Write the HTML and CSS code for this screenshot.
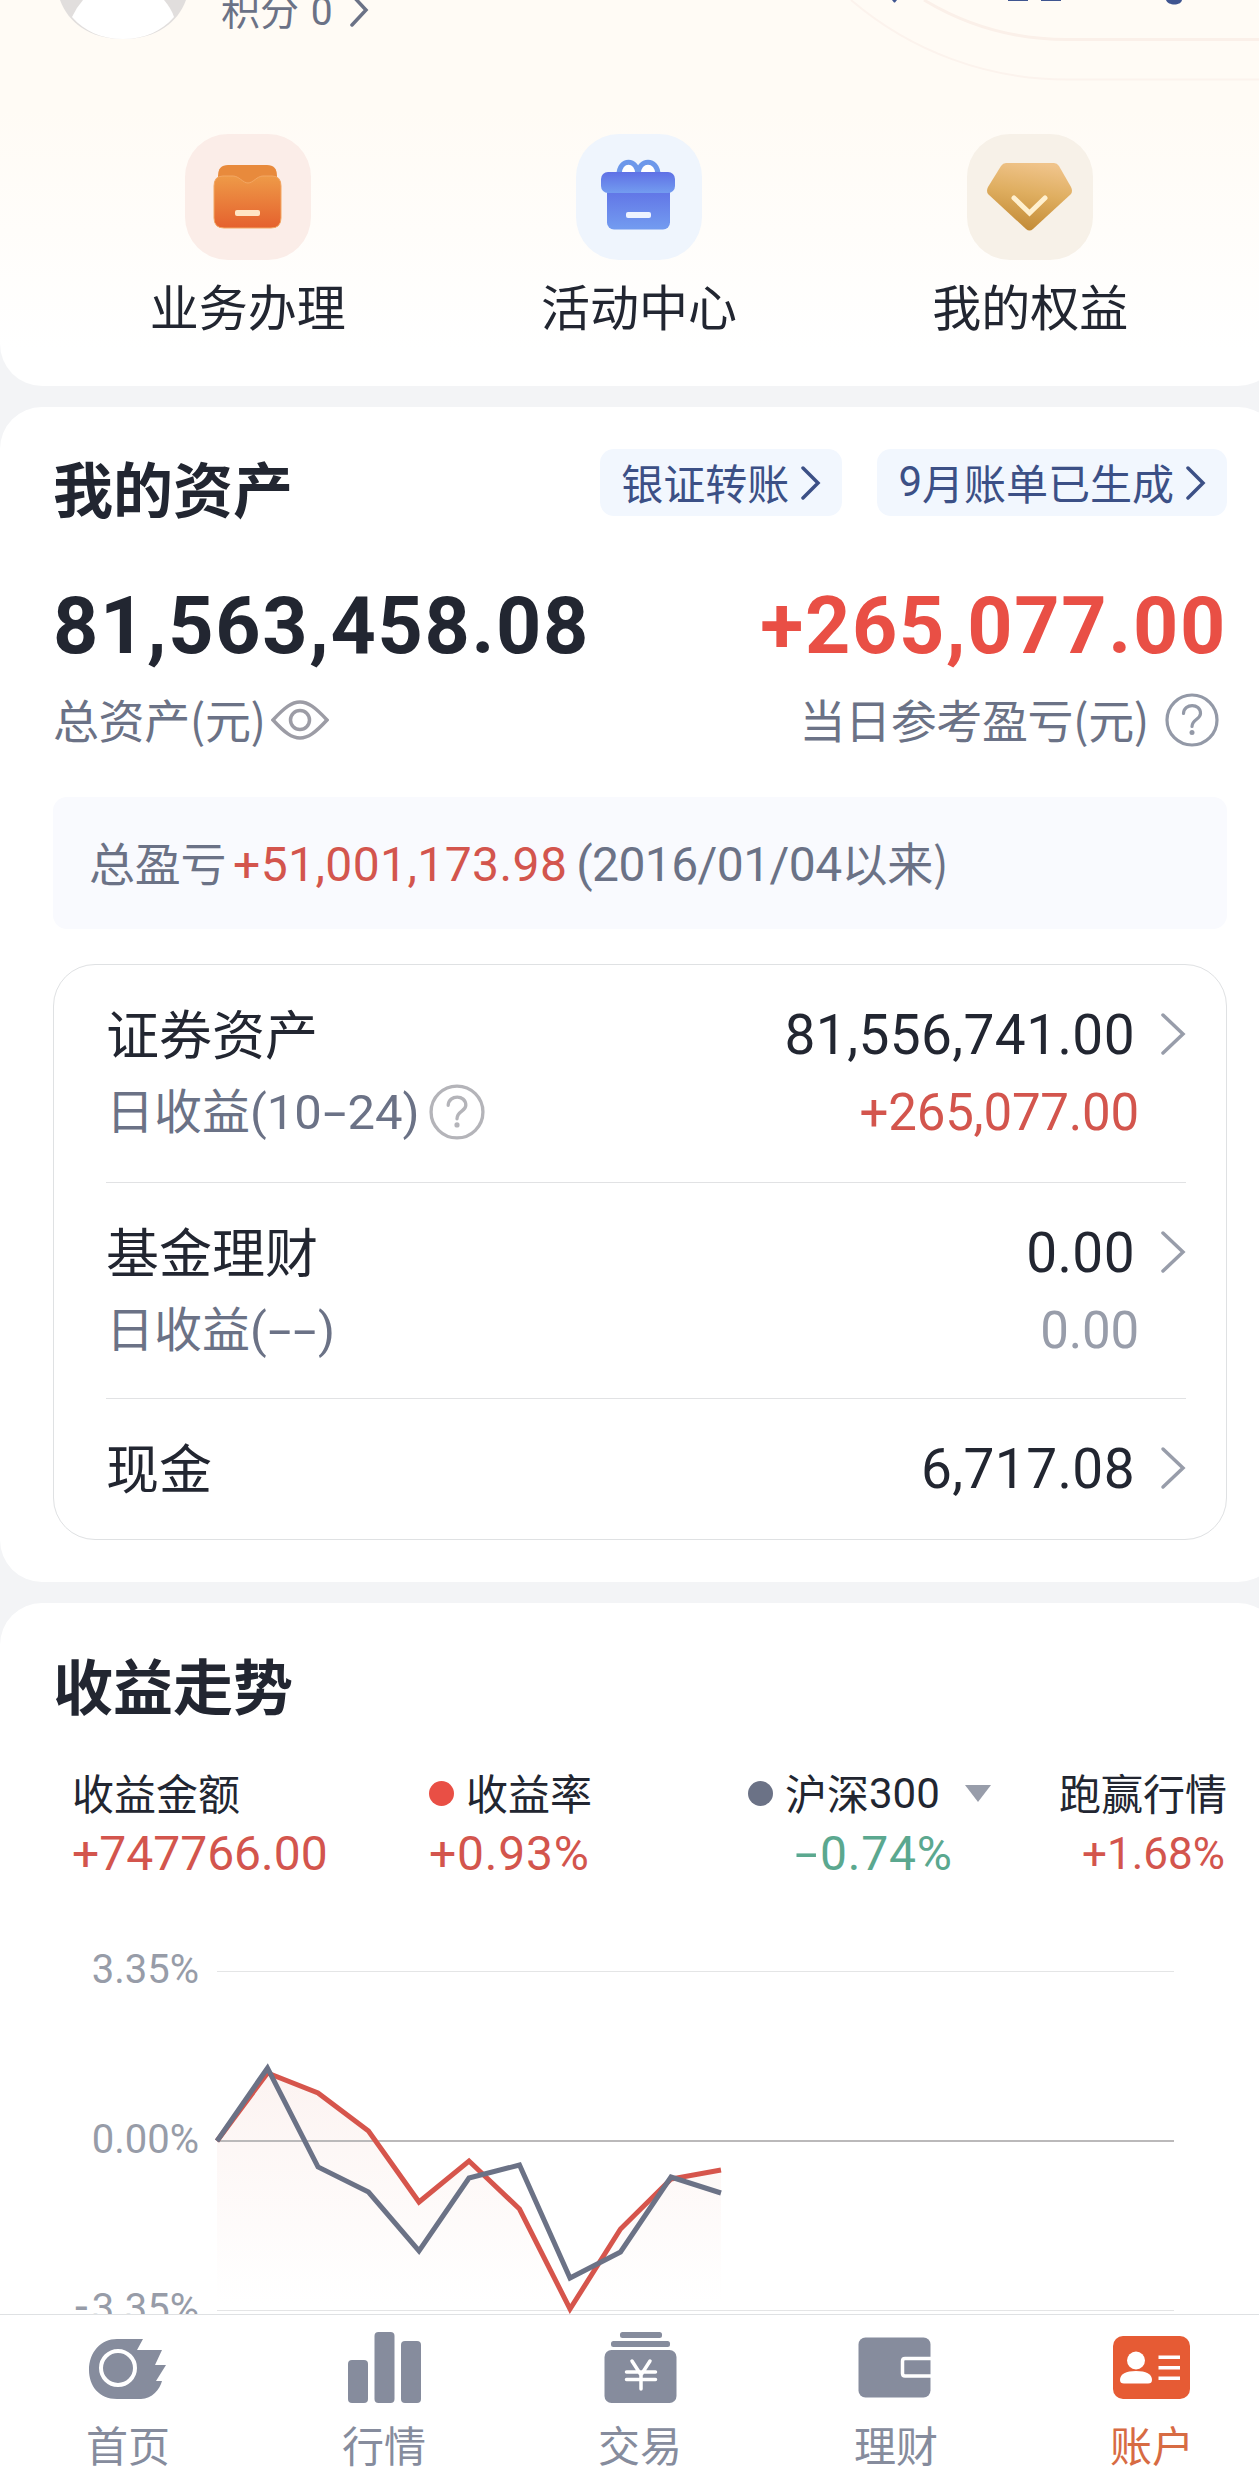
FILE: index.html
```
<!DOCTYPE html>
<html lang="zh-CN">

<head>
    <title>账户</title>
    <meta charset="UTF-8">
    <link rel="stylesheet" href="styles.css">
</head>

<body>
    <div class="page">
        <main class="content">

            <section class="card profile-card">
                <svg class="rings" width="440" height="84" viewBox="0 0 440 84" fill="none">
                    <path d="M32 0A331 331 0 0 0 248 79.500H440" stroke="#fcf3ed" stroke-width="2" />
                    <path d="M105 0A276 276 0 0 0 248 39.500H440" stroke="#fbf0e9" stroke-width="3" />
                    <path d="M73 0h5l-2 2.500h-1zM189 0h20v1h-20zM222 0h20v1h-20zM347 0h16c-1 6-14 6-16 0z" fill="#3f5590" />
                </svg>
                <div class="profile">
                    <svg class="avatar" width="128" height="40" viewBox="0 0 128 40">
                        <path d="M1 0h126C119 22 98 39 64 39S9 22 1 0z" fill="#e1dedd" />
                        <path d="M24 0h81q7 8 10 17C103 31 86 39 64 39S25 31 13 17Q17 8 24 0z" fill="#fff" />
                    </svg>
                    <div class="points">积分 <span class="num">0</span></div>
                    <svg class="points-arrow" width="20" height="36" viewBox="0 0 20 36"><path d="M2 3l14 15L2 33" /></svg>
                </div>
                <div class="shortcuts">
                    <div class="shortcut">
                        <svg width="126" height="126" viewBox="0 0 126 126">
                            <defs>
                                <linearGradient id="orange" x1="0" y1="0" x2="0" y2="1">
                                    <stop offset="0" stop-color="#ee9a48" />
                                    <stop offset="1" stop-color="#e5612e" />
                                </linearGradient>
                            </defs>
                            <rect width="126" height="126" rx="43" fill="#fbede8" />
                            <path d="M43 31H82Q92 31 92 42V56H33V42Q33 31 43 31z" fill="#e88a3c" />
                            <path d="M38 42H48C54 42 58 49 63 49S72 42 78 42H87Q96 42 96 52V84Q96 94 86 94H39Q29 94 29 84V52Q29 42 38 42z" fill="url(#orange)" stroke="#f3a763" stroke-width="1" />
                            <rect x="50" y="76" width="25" height="6" rx="2" fill="#ffe5c4" />
                        </svg>
                        <span>业务办理</span>
                    </div>
                    <div class="shortcut">
                        <svg width="126" height="126" viewBox="0 0 126 126">
                            <defs>
                                <linearGradient id="blue" x1="0" y1="0" x2="0" y2="1">
                                    <stop offset="0" stop-color="#5f70e5" />
                                    <stop offset="1" stop-color="#739cf0" />
                                </linearGradient>
                            </defs>
                            <rect width="126" height="126" rx="43" fill="#eff5fd" />
                            <path d="M43 41C43 24 62 24 62 41C62 24 82 24 82 41" fill="#fff" stroke="#6d98ea" stroke-width="5" />
                            <rect x="31" y="52" width="63" height="43.500" rx="7" fill="url(#blue)" />
                            <rect x="25" y="38" width="74" height="21" rx="7" fill="url(#blue)" />
                            <rect x="50" y="78" width="25" height="6" rx="2" fill="#eef3ff" />
                        </svg>
                        <span>活动中心</span>
                    </div>
                    <div class="shortcut">
                        <svg width="126" height="126" viewBox="0 0 126 126">
                            <defs>
                                <linearGradient id="gold" x1="0.600" y1="0" x2="0.400" y2="1">
                                    <stop offset="0" stop-color="#f0c48b" />
                                    <stop offset="0.450" stop-color="#dfae60" />
                                    <stop offset="1" stop-color="#c28a35" />
                                </linearGradient>
                            </defs>
                            <rect width="126" height="126" rx="43" fill="#f7f1e8" />
                            <path d="M39 29H87Q90 29 92 32L104 53Q106 57 104 60L66 95Q62.500 98 59 95L21 60Q19 57 21 53L34 32Q36 29 39 29z" fill="url(#gold)" />
                            <path d="M47 64L62.500 79L78 64" fill="none" stroke="#fff0cf" stroke-width="5" stroke-linecap="round" />
                        </svg>
                        <span>我的权益</span>
                    </div>
                </div>
            </section>

            <section class="card assets-card">
                <div class="card-head">
                    <h2>我的资产</h2>
                    <div class="pills">
                        <a class="pill">银证转账<svg width="20" height="34" viewBox="0 0 20 34"><path d="M2 2l15 15L2 32" /></svg></a>
                        <a class="pill"><span class="num">9</span>月账单已生成<svg width="20" height="34" viewBox="0 0 20 34"><path d="M2 2l15 15L2 32" /></svg></a>
                    </div>
                </div>
                <div class="totals">
                    <span>81,563,458.08</span>
                    <span class="up">+265,077.00</span>
                </div>
                <div class="totals-labels">
                    <div class="total-label">总资产(元)
                        <svg class="eye" width="58" height="42" viewBox="0 0 58 42"><path d="M2 21C14 8 21 3 29 3S44 8 56 21C44 34 37 39 29 39S14 34 2 21z" /><circle cx="29" cy="21" r="9.500" /></svg>
                    </div>
                    <div class="total-label">当日参考盈亏(元)
                        <svg class="help help-dark" width="54" height="54" viewBox="0 0 54 54"><circle cx="27" cy="27" r="25" /><path d="M18.500 20.500C19 10 35.500 10 35.500 20.500C35.500 26.500 27 26 27 33.500" /><circle class="dot" cx="27" cy="39.500" r="2.500" /></svg>
                    </div>
                </div>
                <div class="summary">
                    总盈亏<span class="num summary-up">+51,001,173.98</span><span class="num summary-date">(2016/01/04</span>以来)
                </div>

                <div class="accounts">
                    <div class="account">
                        <div class="account-main">
                            <span>证券资产</span>
                            <span class="amount">81,556,741.00</span>
                            <svg width="26" height="44" viewBox="0 0 26 44"><path d="M3 3l20 19L3 41" /></svg>
                        </div>
                        <div class="account-sub">
                            <span>日收益<span class="num">(10<span class="dash">-</span>24)</span></span>
                            <svg class="help" width="56" height="56" viewBox="0 0 54 54"><circle cx="27" cy="27" r="25" /><path d="M18.500 20.500C19 10 35.500 10 35.500 20.500C35.500 26.500 27 26 27 33.500" /><circle class="dot" cx="27" cy="39.500" r="2.500" /></svg>
                            <span class="change up">+265,077.00</span>
                        </div>
                    </div>
                    <div class="account">
                        <div class="account-main">
                            <span>基金理财</span>
                            <span class="amount">0.00</span>
                            <svg width="26" height="44" viewBox="0 0 26 44"><path d="M3 3l20 19L3 41" /></svg>
                        </div>
                        <div class="account-sub">
                            <span>日收益<span class="num">(<span class="dash">-</span><span class="dash">-</span>)</span></span>
                            <span class="change">0.00</span>
                        </div>
                    </div>
                    <div class="account">
                        <div class="account-main">
                            <span>现金</span>
                            <span class="amount">6,717.08</span>
                            <svg width="26" height="44" viewBox="0 0 26 44"><path d="M3 3l20 19L3 41" /></svg>
                        </div>
                    </div>
                </div>
            </section>

            <section class="card trend-card">
                <h2>收益走势</h2>
                <div class="stats">
                    <div class="stat">
                        <div class="stat-name">收益金额</div>
                        <div class="stat-value up">+747766.00</div>
                    </div>
                    <div class="stat stat-rate">
                        <div class="stat-name"><i class="legend legend-red"></i>收益率</div>
                        <div class="stat-value up">+0.93%</div>
                    </div>
                    <div class="stat stat-index">
                        <div class="stat-name"><i class="legend legend-gray"></i>沪深<span class="num">300</span><i class="triangle"></i></div>
                        <div class="stat-value down"><span class="dash">-</span>0.74%</div>
                    </div>
                    <div class="stat stat-right">
                        <div class="stat-name">跑赢行情</div>
                        <div class="stat-value up small">+1.68%</div>
                    </div>
                </div>
                <svg class="chart" width="1174" height="440" viewBox="0 0 1174 440">
                    <defs>
                        <linearGradient id="area" gradientUnits="userSpaceOnUse" x1="0" y1="165" x2="0" y2="400">
                            <stop offset="0" stop-color="#fcf3f1" />
                            <stop offset="1" stop-color="#ffffff" />
                        </linearGradient>
                    </defs>
                    <path d="M164 238L214.500 170L265 190L315.500 228L366 299L416 258L466.500 306L517 406L567.500 326L618 276L668 267V407H164z" fill="url(#area)" />
                    <path d="M164 68.500H1121M164 407.500H1121" stroke="#e4e5e6" />
                    <path d="M164 238H1121" stroke="#bbb9ba" stroke-width="2" />
                    <polyline points="164,238 214.500,170 265,190 315.500,228 366,299 416,258 466.500,306 517,406 567.500,326 618,276 668,267" fill="none" stroke="#d6554c" stroke-width="5" />
                    <polyline points="164,238 214.500,165 265,264 315.500,289 366,348 416,275 466.500,262 517,375 567.500,349 618,274 668,290" fill="none" stroke="#6b7286" stroke-width="5" />
                    <text x="146" y="80">3.35%</text>
                    <text x="146" y="249.500">0.00%</text>
                    <text x="146" y="419"><tspan class="axis-minus">-</tspan>3.35%</text>
                </svg>
            </section>
        </main>

        <nav class="tabbar">
            <a class="tab">
                <svg width="80" height="80" viewBox="0 0 80 80">
                    <path d="M29 12H55L49 23H74L67 38H78L68 54H74C72 62 64 72 53 72H29C11 72 1 59 1 43C1 25 13 12 29 12z" />
                    <circle cx="30" cy="41" r="17" fill="none" stroke="#fff" stroke-width="4" />
                </svg>
                <span>首页</span>
            </a>
            <a class="tab">
                <svg width="80" height="80" viewBox="0 0 80 80">
                    <rect x="4" y="33" width="20" height="43" rx="4" />
                    <rect x="30.500" y="5" width="20" height="71" rx="4" />
                    <rect x="57" y="14" width="20" height="62" rx="4" />
                </svg>
                <span>行情</span>
            </a>
            <a class="tab">
                <svg width="80" height="80" viewBox="0 0 80 80">
                    <rect x="20" y="5" width="42" height="6" rx="2.500" />
                    <rect x="11" y="14" width="59" height="6" rx="2.500" />
                    <rect x="4.500" y="23" width="72" height="53" rx="7" />
                    <path d="M32 34l9 14l9-14M41 48v14M26.500 45h29M26.500 52.500h29" fill="none" stroke="#fff" stroke-width="3.500" stroke-linecap="round" />
                </svg>
                <span>交易</span>
            </a>
            <a class="tab">
                <svg width="80" height="80" viewBox="0 0 80 80">
                    <rect x="2.500" y="10.500" width="72" height="60" rx="7" />
                    <path d="M75 31.500H49Q46.500 31.500 46.500 34V46.500Q46.500 49 49 49H75" fill="none" stroke="#fff" stroke-width="3.500" />
                </svg>
                <span>理财</span>
            </a>
            <a class="tab active">
                <svg width="80" height="80" viewBox="0 0 80 80">
                    <rect x="1" y="9" width="77" height="63" rx="10" />
                    <g fill="#fff">
                        <circle cx="24" cy="33.500" r="9" />
                        <path d="M8 53C8 47 14 44 24 44S40 47 40 53Q40 56.500 36 56.500H12Q8 56.500 8 53z" />
                        <path d="M46.500 28.500H68V32H46.500zM46.500 39H68V42.500H46.500zM46.500 49.500H68V53H46.500z" />
                    </g>
                </svg>
                <span>账户</span>
            </a>
        </nav>
    </div>
</body>

</html>
```
FILE: styles.css
```
* {
    box-sizing: border-box;
}

body {
    margin: 0;
    overflow: hidden;
    background: #f3f4f6;
    color: #222631;
    font-family: "Noto Sans CJK SC", "Noto Sans", sans-serif;
}

.num,
.totals,
.amount,
.change,
.stat-value {
    font-family: Roboto, "Noto Sans CJK SC", sans-serif;
}

/* wide minus sign */
.dash {
    display: inline-block;
    margin: 0 6px;
    transform: scaleX(1.7);
}

h2 {
    margin: 0;
    font-size: 60px;
    line-height: 70px;
    font-weight: 700;
}

.page {
    display: flex;
    flex-direction: column;
    width: 1280px;
    height: 2489px;
}

.content {
    flex: 1;
    min-height: 0;
    overflow: hidden;
    display: flex;
    flex-direction: column;
    gap: 21px;
}

.card {
    flex: none;
    background: #fff;
    border-radius: 42px;
    padding: 0 53px;
}

/* profile and shortcuts */
.profile-card {
    position: relative;
    height: 386px;
    padding: 0 54px 0 52px;
    border-radius: 0 0 42px 42px;
    background: linear-gradient(#fffbf5 0, #fffbf5 110px, #fff 350px);
}

.rings {
    position: absolute;
    top: 0;
    left: 819px;
}

.profile {
    display: flex;
    height: 134px;
    padding-left: 7px;
}

.points {
    margin: -12px 0 0 34px;
    font-size: 39px;
    line-height: 40px;
    color: #6b7286;
    white-space: pre;
    word-spacing: 3px;
}

.points-arrow {
    margin: -8px 0 0 17px;
    fill: none;
    stroke: #6b7286;
    stroke-width: 3.5;
    stroke-linecap: round;
}

.shortcuts {
    display: grid;
    grid-template-columns: repeat(3, 1fr);
}

.shortcut {
    display: flex;
    flex-direction: column;
    align-items: center;
    gap: 15px;
    font-size: 49px;
    line-height: 60px;
}

/* assets */
.assets-card {
    padding-top: 42px;
    padding-bottom: 42px;
}

.card-head {
    display: flex;
    justify-content: space-between;
    height: 67px;
}

.card-head h2 {
    margin-top: 3px;
}

.pills {
    display: flex;
    gap: 35px;
}

.pill {
    display: flex;
    align-items: center;
    height: 67px;
    padding: 0 21px;
    border-radius: 14px;
    background: #f2f7fe;
    color: #3c5086;
    font-size: 42px;
    line-height: 60px;
    padding-bottom: 2px;
}

.pill svg {
    margin: 2px 0 0 12px;
    fill: none;
    stroke: #3c5086;
    stroke-width: 3.5;
    stroke-linecap: round;
}

.totals {
    display: flex;
    justify-content: space-between;
    margin: 65px 0 17px;
    font-size: 79px;
    line-height: 90px;
    font-weight: 700;
    letter-spacing: 1.7px;
}

.totals .up {
    color: #e94f45;
}

.totals-labels {
    display: flex;
    justify-content: space-between;
    color: #6b7286;
    font-size: 46px;
    line-height: 60px;
    letter-spacing: -0.4px;
}

.total-label {
    display: flex;
    align-items: center;
}

.eye {
    margin: 3px 0 0 5px;
    fill: none;
    stroke: #9c9ca5;
    stroke-width: 3.5;
}

.help {
    fill: none;
    stroke: #b4b4b9;
    stroke-width: 3.2;
    stroke-linecap: round;
}

.help .dot {
    fill: #b4b4b9;
    stroke: none;
}

.help-dark {
    margin: 4px 8px 0 16px;
    stroke: #9399a7;
}

.help-dark .dot {
    fill: #9399a7;
}

.summary {
    height: 132px;
    margin: 49px 0 35px;
    padding-left: 36px;
    border-radius: 14px;
    background: #f9fafe;
    color: #6b7286;
    font-size: 46px;
    line-height: 128px;
    letter-spacing: -0.3px;
}

.summary .num {
    font-size: 48px;
}

.summary .summary-up {
    margin: 0 9px 0 7px;
    color: #d3554d;
    letter-spacing: 0.4px;
}

.summary .summary-date {
    letter-spacing: -0.6px;
}

.accounts {
    height: 576px;
    padding: 0 40px 0 52px;
    border: 1px solid #dfe1e3;
    border-radius: 42px;
}

.account {
    height: 216px;
    padding-top: 37px;
    border-bottom: 1px solid #e1e2e4;
}

.account:first-child {
    height: 218px;
}

.account:last-child {
    height: auto;
    border-bottom: none;
}

.account-main,
.account-sub {
    display: flex;
    align-items: center;
    height: 60px;
    line-height: 60px;
}

.account-main {
    margin-bottom: 18px;
    font-size: 53px;
}

.amount {
    margin: 6px 0 0 auto;
    font-size: 55px;
    letter-spacing: 0.4px;
}

.account-main svg {
    margin: 3px 0 0 25px;
    fill: none;
    stroke: #989daa;
    stroke-width: 3.5;
    stroke-linecap: round;
}

.account-sub {
    color: #6b7286;
    font-size: 48px;
}

.account-sub .num {
    font-size: 49px;
}

.account-sub .help {
    margin: 3px 0 0 9px;
}

.change {
    margin: 5px 47px 0 auto;
    font-size: 51px;
    letter-spacing: -0.2px;
    color: #989daa;
}

.change.up,
.stat-value.up {
    color: #d3554d;
}

/* trend */
.trend-card {
    height: 800px;
    padding-top: 46px;
    border-radius: 42px 42px 0 0;
}

.stats {
    display: grid;
    grid-template-columns: 357px 319px 250px 1fr;
    margin-top: 48px;
    padding-left: 19px;
}

.stat-name {
    display: flex;
    align-items: center;
    height: 50px;
    font-size: 42px;
    line-height: 50px;
}

.stat-name .num {
    margin-top: 4px;
}

.stat-value {
    margin-top: 12px;
    font-size: 48px;
    line-height: 50px;
}

.stat-rate .stat-value,
.stat-index .stat-value {
    letter-spacing: 0.8px;
}

.stat-value.down {
    color: #5ba88f;
}

.stat-value.small {
    font-size: 44px;
}

.stat-index .stat-value {
    padding-left: 46px;
}

.stat-right .stat-name {
    justify-content: flex-end;
}

.stat-right .stat-value {
    padding-right: 2px;
    text-align: right;
}

.legend {
    width: 25px;
    height: 25px;
    margin: 3px 12px 0 0;
    border-radius: 50%;
}

.legend-red {
    background: #e94f45;
}

.legend-gray {
    background: #6b7286;
}

.triangle {
    margin: 2px 0 0 25px;
    border: 13px solid transparent;
    border-top: 17px solid #989daa;
    border-bottom: none;
}

.chart {
    display: block;
    margin-top: 24px;
}

.chart text {
    fill: #979ca8;
    font-family: Roboto, sans-serif;
    font-size: 40px;
    text-anchor: end;
}

.chart .axis-minus {
    font-size: 46px;
    letter-spacing: 4px;
}

/* bottom tabs */
.tabbar {
    display: grid;
    grid-template-columns: repeat(5, 1fr);
    height: 175px;
    border-top: 1px solid #dfe1e3;
    background: #fff;
}

.tab {
    display: flex;
    flex-direction: column;
    align-items: center;
    padding-top: 12px;
    color: #868c9d;
    font-size: 42px;
    line-height: 50px;
}

.tab svg {
    fill: #868c9d;
    margin-bottom: 12px;
}

.tab.active {
    color: #d76b43;
}

.tab.active svg {
    fill: #e65b34;
}
```
